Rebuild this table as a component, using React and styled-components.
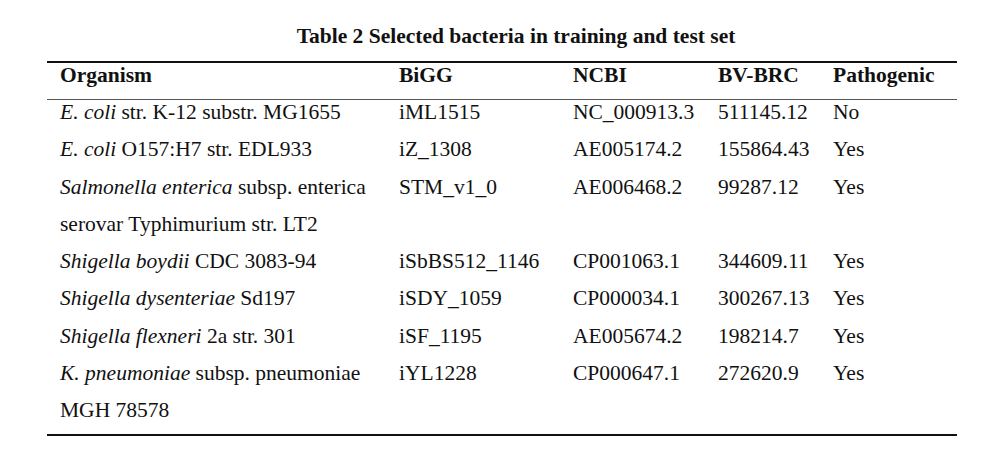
import React from "react";
import styled, { createGlobalStyle } from "styled-components";

const GlobalStyle = createGlobalStyle`
  body {
    margin: 0;
    background: #ffffff;
    font-family: "Liberation Serif", "Times New Roman", serif;
    color: #111111;
  }
`;

const rows = [
  { org: [<i key="i">E. coli</i>, " str. K-12 substr. MG1655"], bigg: "iML1515", ncbi: "NC_000913.3", bv: "511145.12", path: "No" },
  { org: [<i key="i">E. coli</i>, " O157:H7 str. EDL933"], bigg: "iZ_1308", ncbi: "AE005174.2", bv: "155864.43", path: "Yes" },
  {
    org: [<i key="i">Salmonella enterica</i>, " subsp. enterica", <br key="b" />, "serovar Typhimurium str. LT2"],
    bigg: "STM_v1_0",
    ncbi: "AE006468.2",
    bv: "99287.12",
    path: "Yes",
  },
  { org: [<i key="i">Shigella boydii</i>, " CDC 3083-94"], bigg: "iSbBS512_1146", ncbi: "CP001063.1", bv: "344609.11", path: "Yes" },
  { org: [<i key="i">Shigella dysenteriae</i>, " Sd197"], bigg: "iSDY_1059", ncbi: "CP000034.1", bv: "300267.13", path: "Yes" },
  { org: [<i key="i">Shigella flexneri</i>, " 2a str. 301"], bigg: "iSF_1195", ncbi: "AE005674.2", bv: "198214.7", path: "Yes" },
  {
    org: [<i key="i">K. pneumoniae</i>, " subsp. pneumoniae", <br key="b" />, "MGH 78578"],
    bigg: "iYL1228",
    ncbi: "CP000647.1",
    bv: "272620.9",
    path: "Yes",
  },
];

export default function App() {
  return (
    <>
      <GlobalStyle />
      <Page>
        <Title>Table 2 Selected bacteria in training and test set</Title>
        <Table>
          <Head>
            <Cell>Organism</Cell>
            <Cell>BiGG</Cell>
            <Cell>NCBI</Cell>
            <Cell>BV-BRC</Cell>
            <Cell>Pathogenic</Cell>
          </Head>
          <Body>
            {rows.map((r, i) => (
              <Row key={i}>
                <Cell>{r.org}</Cell>
                <Cell>{r.bigg}</Cell>
                <Cell>{r.ncbi}</Cell>
                <Cell>{r.bv}</Cell>
                <Cell>{r.path}</Cell>
              </Row>
            ))}
          </Body>
        </Table>
      </Page>
    </>
  );
}

const Page = styled.div`
  width: 1000px;
  height: 472px;
  padding: 23px 43px 0 47px;
  box-sizing: border-box;
`;

const Title = styled.div`
  font-weight: bold;
  font-size: 21.5px;
  line-height: 26px;
  text-align: center;
  padding-left: 28px;
  margin-bottom: 12px;
`;

const Table = styled.div`
  border-top: 2px solid #111111;
  border-bottom: 2px solid #111111;
`;

const columns = "339px 174px 145px 115px 1fr";

const Head = styled.div`
  display: grid;
  grid-template-columns: ${columns};
  padding: 0 13px 12px;
  font-weight: bold;
  font-size: 21.5px;
  line-height: 24px;
  border-bottom: 1px solid #555555;
`;

const Body = styled.div`
  margin-top: -6px;
  padding: 0 13px 4px;
`;

const Row = styled.div`
  display: grid;
  grid-template-columns: ${columns};
  font-size: 21.5px;
  line-height: 37.3px;
`;

const Cell = styled.div`
  white-space: nowrap;
`;
